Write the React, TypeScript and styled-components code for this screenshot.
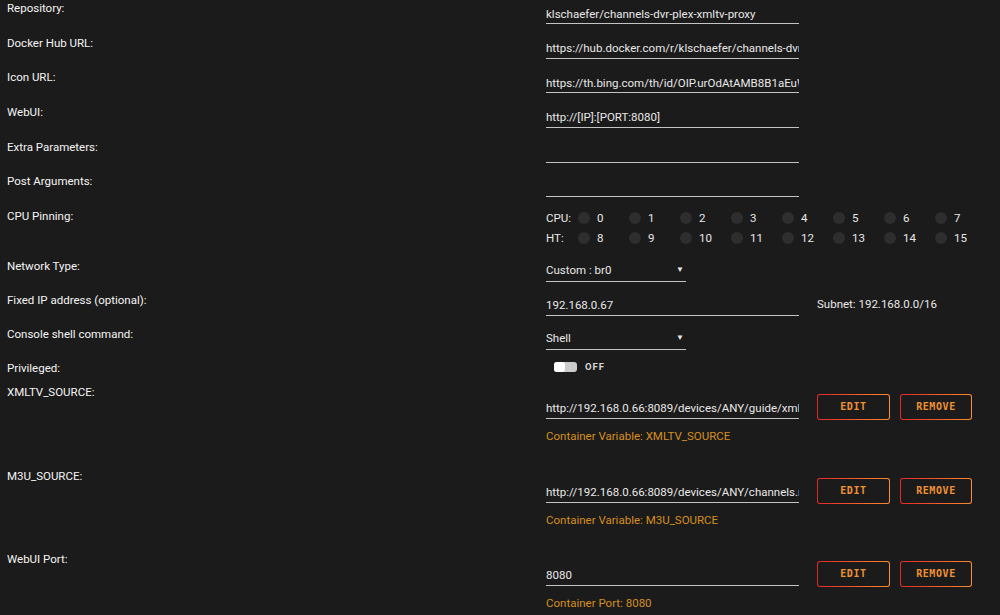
import React from 'react'
import styled, { createGlobalStyle, css } from 'styled-components'

const GlobalStyle = createGlobalStyle`
  html, body {
    margin: 0;
    padding: 0;
    background: #1c1b1b;
  }
  body {
    font-family: Roboto, 'Liberation Sans', sans-serif;
    font-size: 11.5px;
    color: #f2f2f2;
  }
`

const Form = styled.div`
  padding-left: 7px;
  width: 993px;
  overflow: hidden;
`

const Row = styled.div<{ $h: number }>(
  ({ $h }) => css`
    display: grid;
    grid-template-columns: 539px 1fr;
    align-items: start;
    height: ${$h}px;
  `,
)

const Label = styled.div`
  line-height: 16px;
  color: #f4f4f4;
`

const Value = styled.div<{ $pad?: number }>(
  ({ $pad = 0 }) => css`
    padding-top: ${$pad}px;
    display: flex;
    flex-direction: column;
  `,
)

const Line = styled.div`
  display: flex;
  align-items: flex-start;
`

const Field = styled.input<{ $w?: number; $h?: number }>(
  ({ $w = 253, $h = 24 }) => css`
    box-sizing: border-box;
    width: ${$w}px;
    height: ${$h}px;
    padding: ${$h - 20}px 0 0 0;
    margin: 0;
    border: none;
    border-bottom: 1px solid #c4c4c4;
    background: transparent;
    color: #e8e8e8;
    font-family: inherit;
    font-size: 11.5px;
    line-height: 16px;
    outline: none;
  `,
)

const SelectBox = styled.div`
  box-sizing: border-box;
  width: 140px;
  height: 24px;
  padding-top: 4px;
  border-bottom: 1px solid #c4c4c4;
  display: flex;
  justify-content: space-between;
  line-height: 16px;
  color: #e8e8e8;
`

const Caret = styled.span`
  font-size: 8px;
  margin-right: 2px;
  line-height: 16px;
`

const Aside = styled.div`
  margin-left: 18px;
  padding-top: 4px;
  line-height: 16px;
  color: #e8e8e8;
`

const CpuGrid = styled.div`
  display: grid;
  grid-template-columns: 32px repeat(8, 51px);
  grid-auto-rows: 20px;
  align-items: center;
  color: #e8e8e8;
`

const CpuCell = styled.div`
  display: flex;
  align-items: center;
  gap: 7px;
`

const Dot = styled.span`
  width: 12px;
  height: 12px;
  border-radius: 50%;
  background: #2e2e2e;
`

const Toggle = styled.div`
  display: flex;
  align-items: center;
  gap: 8px;
  height: 10px;
  margin: 2px 0 0 8px;
`

const Track = styled.span`
  width: 23px;
  height: 10px;
  border-radius: 3px;
  background: #cbcbcb;
  display: flex;
`

const Knob = styled.span`
  width: 11px;
  height: 10px;
  border-radius: 3px;
  background: #ffffff;
`

const ToggleText = styled.span`
  font-size: 9.5px;
  font-weight: 700;
  letter-spacing: 1px;
  color: #d6d6d6;
`

const Buttons = styled.div`
  display: flex;
  gap: 10px;
  margin-left: 18px;
`

const Button = styled.button<{ $w: number }>(
  ({ $w }) => css`
    box-sizing: border-box;
    width: ${$w}px;
    height: 26px;
    border: 1px solid transparent;
    border-radius: 3px;
    background: linear-gradient(#1c1b1b, #1c1b1b) padding-box,
      linear-gradient(90deg, #e22828 0%, #ff8c2f 100%) border-box;
    color: #ef9233;
    font-family: 'DejaVu Sans Mono', 'Liberation Mono', monospace;
    font-size: 10px;
    font-weight: 700;
    letter-spacing: 0.6px;
    text-transform: uppercase;
    padding: 0;
    cursor: pointer;
  `,
)

const Hint = styled.div`
  margin-top: 8px;
  line-height: 16px;
  color: #d58f1f;
`

type TextRow = { label: string; value: string }

const textRows: TextRow[] = [
  { label: 'Repository:', value: 'klschaefer/channels-dvr-plex-xmltv-proxy' },
  {
    label: 'Docker Hub URL:',
    value: 'https://hub.docker.com/r/klschaefer/channels-dvr-plex-xmltv-proxy/',
  },
  {
    label: 'Icon URL:',
    value: 'https://th.bing.com/th/id/OIP.urOdAtAMB8B1aEuWbLx9OQHaHa',
  },
  { label: 'WebUI:', value: 'http://[IP]:[PORT:8080]' },
  { label: 'Extra Parameters:', value: '' },
  { label: 'Post Arguments:', value: '' },
]

type ConfigRow = { label: string; value: string; hint: string; h: number }

const configRows: ConfigRow[] = [
  {
    label: 'XMLTV_SOURCE:',
    value: 'http://192.168.0.66:8089/devices/ANY/guide/xmltv',
    hint: 'Container Variable: XMLTV_SOURCE',
    h: 84,
  },
  {
    label: 'M3U_SOURCE:',
    value: 'http://192.168.0.66:8089/devices/ANY/channels.m3u',
    hint: 'Container Variable: M3U_SOURCE',
    h: 83,
  },
  {
    label: 'WebUI Port:',
    value: '8080',
    hint: 'Container Port: 8080',
    h: 83,
  },
]

const cpus = [0, 1, 2, 3, 4, 5, 6, 7]

export default function App() {
  return (
    <>
      <GlobalStyle />
      <Form>
        {textRows.map((r) => (
          <Row key={r.label} $h={34.67}>
            <Label>{r.label}</Label>
            <Value>
              <Field value={r.value} readOnly />
            </Value>
          </Row>
        ))}

        <Row $h={50}>
          <Label>CPU Pinning:</Label>
          <CpuGrid>
            <span>CPU:</span>
            {cpus.map((n) => (
              <CpuCell key={n}>
                <Dot />
                {n}
              </CpuCell>
            ))}
            <span>HT:</span>
            {cpus.map((n) => (
              <CpuCell key={n + 8}>
                <Dot />
                {n + 8}
              </CpuCell>
            ))}
          </CpuGrid>
        </Row>

        <Row $h={34}>
          <Label>Network Type:</Label>
          <Value>
            <SelectBox>
              Custom : br0<Caret>▼</Caret>
            </SelectBox>
          </Value>
        </Row>

        <Row $h={34}>
          <Label>Fixed IP address (optional):</Label>
          <Value>
            <Line>
              <Field value="192.168.0.67" readOnly />
              <Aside>Subnet: 192.168.0.0/16</Aside>
            </Line>
          </Value>
        </Row>

        <Row $h={34}>
          <Label>Console shell command:</Label>
          <Value>
            <SelectBox>
              Shell<Caret>▼</Caret>
            </SelectBox>
          </Value>
        </Row>

        <Row $h={24}>
          <Label>Privileged:</Label>
          <Toggle>
            <Track>
              <Knob />
            </Track>
            <ToggleText>OFF</ToggleText>
          </Toggle>
        </Row>

        {configRows.map((r) => (
          <Row key={r.label} $h={r.h}>
            <Label>{r.label}</Label>
            <Value $pad={10}>
              <Line>
                <Field value={r.value} readOnly $h={25} />
                <Buttons>
                  <Button $w={73}>Edit</Button>
                  <Button $w={72}>Remove</Button>
                </Buttons>
              </Line>
              <Hint>{r.hint}</Hint>
            </Value>
          </Row>
        ))}
      </Form>
    </>
  )
}
